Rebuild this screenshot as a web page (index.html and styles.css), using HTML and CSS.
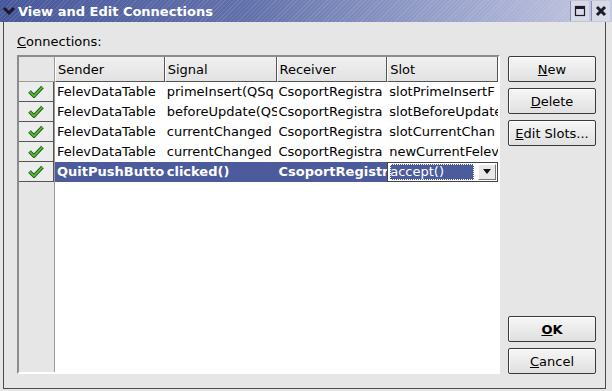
FILE: index.html
```html
<!DOCTYPE html>
<html>
<head>
<meta charset="utf-8">
<link rel="stylesheet" href="styles.css">
</head>
<body>
<div class="window">
  <div class="titlebar">
    <svg class="menu-ico" width="14" height="12" viewBox="0 0 14 12"><path d="M2 3 L7 8 L12 3" fill="none" stroke="#1a1a2a" stroke-width="3"/></svg>
    <span class="title">View and Edit Connections</span>
    <span class="tb-btn"><svg width="14" height="14" viewBox="0 0 14 14"><rect x="2.5" y="2.5" width="9" height="9" fill="none" stroke="#1a1a2a" stroke-width="1.2"/><rect x="2.5" y="2.5" width="9" height="2.5" fill="#1a1a2a"/></svg></span>
    <span class="tb-btn"><svg width="14" height="14" viewBox="0 0 14 14"><path d="M3 3 L11 11 M11 3 L3 11" stroke="#1a1a2a" stroke-width="3"/></svg></span>
  </div>
  <div class="frame">
    <div class="label"><u>C</u>onnections:</div>
    <div class="main">
      <div class="table">
        <div class="vhead">
          <div class="corner"></div>
          <div class="vcell"><svg class="chk" width="16" height="13" viewBox="0 0 16 13"><path d="M1.5 6.5 L6 11 L14.5 2" fill="none" stroke="#1d5a10" stroke-width="3.6"/><path d="M1.5 6.5 L6 11 L14.5 2" fill="none" stroke="#5cc03c" stroke-width="1.7"/></svg></div>
          <div class="vcell"><svg class="chk" width="16" height="13" viewBox="0 0 16 13"><path d="M1.5 6.5 L6 11 L14.5 2" fill="none" stroke="#1d5a10" stroke-width="3.6"/><path d="M1.5 6.5 L6 11 L14.5 2" fill="none" stroke="#5cc03c" stroke-width="1.7"/></svg></div>
          <div class="vcell"><svg class="chk" width="16" height="13" viewBox="0 0 16 13"><path d="M1.5 6.5 L6 11 L14.5 2" fill="none" stroke="#1d5a10" stroke-width="3.6"/><path d="M1.5 6.5 L6 11 L14.5 2" fill="none" stroke="#5cc03c" stroke-width="1.7"/></svg></div>
          <div class="vcell"><svg class="chk" width="16" height="13" viewBox="0 0 16 13"><path d="M1.5 6.5 L6 11 L14.5 2" fill="none" stroke="#1d5a10" stroke-width="3.6"/><path d="M1.5 6.5 L6 11 L14.5 2" fill="none" stroke="#5cc03c" stroke-width="1.7"/></svg></div>
          <div class="vcell"><svg class="chk" width="16" height="13" viewBox="0 0 16 13"><path d="M1.5 6.5 L6 11 L14.5 2" fill="none" stroke="#1d5a10" stroke-width="3.6"/><path d="M1.5 6.5 L6 11 L14.5 2" fill="none" stroke="#5cc03c" stroke-width="1.7"/></svg></div>
        </div>
        <div class="data">
          <div class="hrow">
            <div class="hcell c1">Sender</div>
            <div class="hcell c2">Signal</div>
            <div class="hcell c3">Receiver</div>
            <div class="hcell c4">Slot</div>
          </div>
          <div class="row">
            <div class="cell c1">FelevDataTable</div>
            <div class="cell c2">primeInsert(QSq</div>
            <div class="cell c3">CsoportRegistra</div>
            <div class="cell c4">slotPrimeInsertF</div>
          </div>
          <div class="row">
            <div class="cell c1">FelevDataTable</div>
            <div class="cell c2">beforeUpdate(QS</div>
            <div class="cell c3">CsoportRegistra</div>
            <div class="cell c4">slotBeforeUpdate</div>
          </div>
          <div class="row">
            <div class="cell c1">FelevDataTable</div>
            <div class="cell c2">currentChanged</div>
            <div class="cell c3">CsoportRegistra</div>
            <div class="cell c4">slotCurrentChan</div>
          </div>
          <div class="row">
            <div class="cell c1">FelevDataTable</div>
            <div class="cell c2">currentChanged</div>
            <div class="cell c3">CsoportRegistra</div>
            <div class="cell c4">newCurrentFelev</div>
          </div>
          <div class="row sel">
            <div class="cell c1">QuitPushButto</div>
            <div class="cell c2">clicked()</div>
            <div class="cell c3">CsoportRegistr</div>
            <div class="cell c4 editor">
              <div class="combo">
                <span class="combo-text">accept()</span>
                <span class="combo-arrow"><svg width="10" height="6" viewBox="0 0 10 6"><path d="M1 0 L9 0 L5 5 Z" fill="#111"/></svg></span>
              </div>
            </div>
          </div>
        </div>
      </div>
      <div class="buttons">
        <div class="btn"><u>N</u>ew</div>
        <div class="btn"><u>D</u>elete</div>
        <div class="btn"><u>E</u>dit Slots...</div>
        <div class="spacer"></div>
        <div class="btn def"><u>O</u>K</div>
        <div class="btn"><u>C</u>ancel</div>
      </div>
    </div>
  </div>
</div>
</body>
</html>
```

FILE: styles.css
```css
html, body {
  margin: 0;
  padding: 0;
  background: #e6e6e6;
}
.window {
  width: 612px;
  height: 391px;
  display: flex;
  flex-direction: column;
  font-family: "DejaVu Sans", sans-serif;
  font-size: 13px;
  color: #000;
  background: #e6e6e6;
  overflow: hidden;
}
.titlebar {
  height: 22px;
  flex: none;
  display: flex;
  align-items: center;
  background:
    repeating-linear-gradient(135deg, rgba(255,255,255,0.10) 0 1px, rgba(255,255,255,0) 1px 3px),
    linear-gradient(90deg, #46569a 0%, #6170aa 40%, #a4acd2 80%, #c4c8e0 100%);
}
.menu-ico {
  margin-left: 2px;
  margin-right: 2px;
}
.title {
  color: #fff;
  font-weight: bold;
  font-size: 13px;
  flex: 1;
}
.tb-btn {
  width: 18px;
  height: 20px;
  margin-right: 2px;
  display: flex;
  align-items: center;
  justify-content: center;
  background: #d8dae6;
  border-left: 1px solid #8a90b8;
}
.frame {
  flex: 1;
  margin: 0 6px 2px 3px;
  border-left: 1px solid #4a4a4a;
  border-right: 1px solid #4a4a4a;
  border-bottom: 1px solid #4a4a4a;
  padding: 11px 6px 14px 13px;
  display: flex;
  flex-direction: column;
}
.label {
  height: 22px;
  line-height: 17px;
}
.main {
  flex: 1;
  display: flex;
  gap: 8px;
}
.table {
  width: 479px;
  border-top: 2px solid #8c8c8c;
  border-left: 2px solid #8c8c8c;
  border-right: 2px solid #fff;
  border-bottom: 2px solid #fff;
  display: flex;
  background: #fff;
}
.vhead {
  width: 35px;
  background: #e6e6e6;
  border-right: 1px solid #9a9a9a;
  flex: none;
}
.corner {
  height: 25px;
  box-sizing: border-box;
  border-bottom: 1px solid #9a9a9a;
}
.vcell {
  height: 20px;
  box-sizing: border-box;
  border-bottom: 1px solid #555;
  border-right: 1px solid #555;
  background: #ececec;
  display: flex;
  align-items: center;
  justify-content: center;
}
.data {
  flex: 1;
  display: flex;
  flex-direction: column;
  min-width: 0;
}
.hrow {
  height: 25px;
  display: flex;
  background: #e6e6e6;
}
.hcell {
  box-sizing: border-box;
  height: 25px;
  line-height: 25px;
  padding-left: 2px;
  border-right: 1px solid #555;
  border-bottom: 1px solid #555;
  border-left: 1px solid #fff;
  background: linear-gradient(#f0f0f0, #e2e2e2);
  white-space: nowrap;
  overflow: hidden;
}
.c1 { width: 110px; }
.c2 { width: 112px; }
.c3 { width: 111px; }
.c4 { width: 111px; }
.row {
  height: 20px;
  display: flex;
}
.cell {
  box-sizing: border-box;
  height: 20px;
  line-height: 20px;
  padding-left: 2px;
  padding-right: 3px;
  white-space: nowrap;
  overflow: hidden;
}
.sel .cell {
  background: #4c5b9c;
  color: #fff;
  font-weight: bold;
}
.sel .cell.editor {
  background: #fff;
  padding: 0;
}
.combo {
  height: 20px;
  box-sizing: border-box;
  border: 1px solid #444;
  display: flex;
  align-items: center;
  background: #fff;
  font-weight: normal;
}
.combo-text {
  margin-left: 2px;
  width: 84px;
  height: 16px;
  line-height: 15px;
  background: #4c5b9c;
  color: #fff;
  outline: 1px dotted #fff;
  outline-offset: -1px;
}
.combo-arrow {
  margin-left: auto;
  margin-right: 1px;
  width: 18px;
  height: 16px;
  display: flex;
  align-items: center;
  justify-content: center;
  background: #e8e8e8;
  border: 1px solid #fff;
  border-right-color: #777;
  border-bottom-color: #777;
  box-sizing: border-box;
}
.buttons {
  width: 88px;
  margin-top: 1px;
  display: flex;
  flex-direction: column;
  gap: 6px;
}
.spacer {
  flex: 1;
}
.btn {
  height: 26px;
  box-sizing: border-box;
  border: 1px solid #3a3a3a;
  border-radius: 2px;
  background: linear-gradient(#f6f6f6, #e0e0e0);
  box-shadow: inset 1px 1px 0 #fff;
  display: flex;
  align-items: center;
  justify-content: center;
}
.btn.def {
  font-weight: bold;
}
```
